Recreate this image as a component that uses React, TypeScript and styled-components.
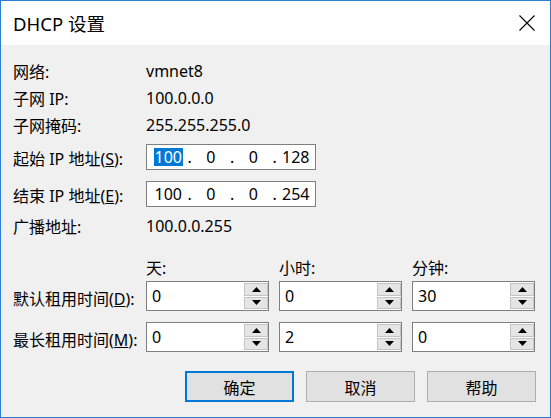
import React from 'react';
import styled, { createGlobalStyle } from 'styled-components';

const GlobalStyle = createGlobalStyle`
  html, body {
    margin: 0;
    padding: 0;
    background: #ffffff;
  }
  body {
    font-family: 'Noto Sans', 'Noto Sans CJK SC', sans-serif;
    color: #000;
  }
`;

const Window = styled.div`
  width: 551px;
  height: 418px;
  box-sizing: border-box;
  border: 1px solid #2d7dd2;
  display: flex;
  flex-direction: column;
  background: #f0f0f0;
`;

const TitleBar = styled.div`
  height: 44px;
  background: #ffffff;
  display: flex;
  align-items: center;
  padding-left: 12px;
  font-size: 18.5px;
`;

const CloseButton = styled.div`
  margin-left: auto;
  width: 46px;
  height: 44px;
  display: flex;
  align-items: center;
  justify-content: center;
`;

const Content = styled.div`
  flex: 1;
  display: flex;
  flex-direction: column;
  padding: 12px 14px 0 12px;
  font-size: 16px;
`;

const Row = styled.div<{ $top?: number; $height: number }>`
  display: grid;
  grid-template-columns: 133px 1fr;
  align-items: center;
  height: ${(p) => p.$height}px;
  margin-top: ${(p) => p.$top ?? 0}px;
`;

const Label = styled.div<{ $shift?: number }>`
  white-space: nowrap;
  padding-top: ${(p) => p.$shift ?? 0}px;
`;

const IpBox = styled.div`
  width: 170px;
  height: 26px;
  box-sizing: border-box;
  border: 1px solid #7f7f7f;
  background: #ffffff;
  display: flex;
  align-items: center;
  padding-left: 2px;
`;

const IpPart = styled.div`
  flex: 1;
  text-align: center;
`;

const IpDot = styled.div`
  width: 4px;
  text-align: center;
`;

const Selected = styled.span`
  background: #0078d7;
  color: #ffffff;
  padding: 0 1px;
  line-height: 18px;
  display: inline-block;
`;

const SpinGrid = styled.div<{ $top: number; $gap?: number; $rowHeight: number }>`
  display: grid;
  grid-template-columns: 123px repeat(3, 123px);
  grid-auto-rows: ${(p) => p.$rowHeight}px;
  column-gap: 10px;
  row-gap: ${(p) => p.$gap ?? 0}px;
  align-items: center;
  margin-top: ${(p) => p.$top}px;
`;

const SpinBox = styled.div`
  height: 30px;
  box-sizing: border-box;
  border: 1px solid #7f7f7f;
  background: #ffffff;
  display: flex;
`;

const SpinValue = styled.div`
  flex: 1;
  display: flex;
  align-items: center;
  padding-left: 5px;
`;

const SpinButtons = styled.div`
  width: 24px;
  display: flex;
  flex-direction: column;
  padding: 1px 0;
  gap: 1px;
`;

const SpinButton = styled.div`
  flex: 1;
  background: #e5e5e5;
  border: 1px solid #c4c4c4;
  display: flex;
  align-items: center;
  justify-content: center;
`;

const ButtonRow = styled.div`
  display: flex;
  justify-content: flex-end;
  gap: 12px;
  margin-top: 19px;
`;

const Button = styled.button<{ $primary?: boolean }>`
  width: 109px;
  height: 31px;
  box-sizing: border-box;
  background: #e1e1e1;
  border: ${(p) => (p.$primary ? '2px solid #0078d7' : '1px solid #adadad')};
  font: inherit;
  font-size: 16px;
  color: #000;
  padding: 0;
`;

const Arrow = ({ down }: { down?: boolean }) => (
  <svg width="9" height="5" viewBox="0 0 9 5">
    <path d={down ? 'M0 0 H9 L4.5 5 Z' : 'M0 5 H9 L4.5 0 Z'} fill="#000" />
  </svg>
);

const Spinner = ({ value }: { value: string }) => (
  <SpinBox>
    <SpinValue>{value}</SpinValue>
    <SpinButtons>
      <SpinButton>
        <Arrow />
      </SpinButton>
      <SpinButton>
        <Arrow down />
      </SpinButton>
    </SpinButtons>
  </SpinBox>
);

const IpField = ({ parts, selectFirst }: { parts: string[]; selectFirst?: boolean }) => (
  <IpBox>
    {parts.map((part, i) => (
      <React.Fragment key={i}>
        {i > 0 && <IpDot>.</IpDot>}
        <IpPart>{i === 0 && selectFirst ? <Selected>{part}</Selected> : part}</IpPart>
      </React.Fragment>
    ))}
  </IpBox>
);

export default function App() {
  return (
    <>
      <GlobalStyle />
      <Window>
        <TitleBar>
          DHCP 设置
          <CloseButton>
            <svg width="16" height="16" viewBox="0 0 16 16">
              <path d="M0.5 0.5 L15.5 15.5 M15.5 0.5 L0.5 15.5" stroke="#000" strokeWidth="1.1" />
            </svg>
          </CloseButton>
        </TitleBar>
        <Content>
          <Row $height={27}>
            <Label>网络:</Label>
            <div>vmnet8</div>
          </Row>
          <Row $height={27}>
            <Label>子网 IP:</Label>
            <div>100.0.0.0</div>
          </Row>
          <Row $height={27}>
            <Label>子网掩码:</Label>
            <div>255.255.255.0</div>
          </Row>
          <Row $height={26} $top={5}>
            <Label $shift={3}>
              起始 IP 地址(<u>S</u>):
            </Label>
            <IpField parts={['100', '0', '0', '128']} selectFirst />
          </Row>
          <Row $height={26} $top={11}>
            <Label $shift={3}>
              结束 IP 地址(<u>E</u>):
            </Label>
            <IpField parts={['100', '0', '0', '254']} />
          </Row>
          <Row $height={27} $top={6}>
            <Label>广播地址:</Label>
            <div>100.0.0.255</div>
          </Row>

          <SpinGrid $top={17} $rowHeight={21}>
            <div />
            <Label>天:</Label>
            <Label>小时:</Label>
            <Label>分钟:</Label>
          </SpinGrid>
          <SpinGrid $top={4} $gap={11} $rowHeight={30}>
            <Label $shift={4}>
              默认租用时间(<u>D</u>):
            </Label>
            <Spinner value="0" />
            <Spinner value="0" />
            <Spinner value="30" />
            <Label $shift={4}>
              最长租用时间(<u>M</u>):
            </Label>
            <Spinner value="0" />
            <Spinner value="2" />
            <Spinner value="0" />
          </SpinGrid>

          <ButtonRow>
            <Button $primary>确定</Button>
            <Button>取消</Button>
            <Button>帮助</Button>
          </ButtonRow>
        </Content>
      </Window>
    </>
  );
}
